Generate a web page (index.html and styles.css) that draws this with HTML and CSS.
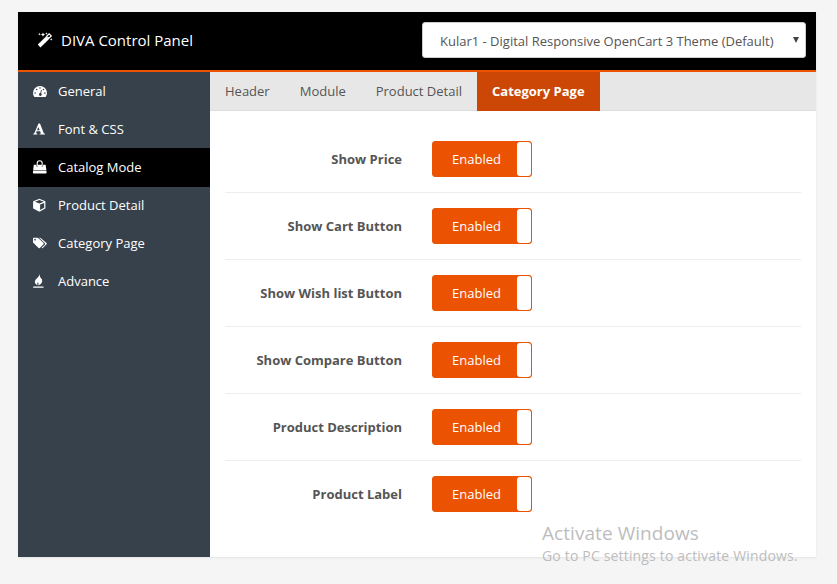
FILE: index.html
```html
<!DOCTYPE html>
<html lang="en">
<head>
<meta charset="utf-8">
<title>DIVA Control Panel</title>
<link rel="stylesheet" href="styles.css">
</head>
<body>
<div class="panel">
  <header class="top">
    <svg class="wand" viewBox="0 0 16 16"><path d="M.8 12.600 9 4.400l2.900 2.800-8.500 8.300z" fill="#fff"/><path d="M9.700 4.300 12.200 1.900l2 2-2.500 2.500z" fill="#000" stroke="#fff" stroke-width="1.300"/><path d="M2.500.8l.4 1 1 .4-1 .4-.4 1-.4-1-1-.4 1-.4zM6 .4l.7 1.500 1.500.6-1.500.7L6 4.700l-.7-1.500-1.500-.7 1.500-.6zM14.200 6l.4 1 1 .4-1 .4-.4 1-.4-1-1-.4 1-.4zM9.400.3l.4.900.9.300-.9.400-.4.900-.3-.9-.9-.4.900-.3z" fill="#fff"/></svg>
    <h1>DIVA Control Panel</h1>
    <div class="select"><span>Kular1 - Digital Responsive OpenCart 3 Theme (Default)</span><svg class="caret" viewBox="0 0 6 6"><path d="M0 0h6L3 6z"/></svg></div>
  </header>
  <div class="main">
    <nav class="menu">
      <a><svg viewBox="0 0 14 14"><path fill-rule="evenodd" d="M7 2a7 7 0 0 0-7 7c0 1.400.4 2.500 1.100 3.600.1.200.2.300.4.300h11c.2 0 .3-.1.400-.3A7 7 0 0 0 7 2zM2.100 8.200a.8.800 0 1 1 0 1.600.8.800 0 0 1 0-1.600zM3.600 4.700a.8.800 0 1 1 0 1.600.8.800 0 0 1 0-1.600zM7 3.200a.8.800 0 1 1 0 1.600.8.800 0 0 1 0-1.600zM8 6.100l.8.200-.7 2.900a1.400 1.400 0 1 1-.8-.2zM10.500 4.700a.8.800 0 1 1 0 1.600.8.800 0 0 1 0-1.600zM11.900 8.200a.8.800 0 1 1 0 1.600.8.800 0 0 1 0-1.600z"/></svg>General</a>
      <a><svg viewBox="0 0 14 14"><path fill-rule="evenodd" d="M5.500 1.500H7l3.700 9.400c.2.500.6.700 1.300.8v.8H6.600v-.8c1 0 1.300-.2 1.100-.8L7.100 9.300H3.700l-.5 1.300c-.2.700.1 1 1.200 1.100v.8H.2v-.8c.7-.1 1-.3 1.300-1zM5.300 4.900 4.100 8.300h2.600z"/></svg>Font &amp; CSS</a>
      <a class="on"><svg viewBox="0 0 14 14"><path d="M.8 4.700h11.800l.8 5.300H.2zM.1 10.500h13.300l.2 2.300c0 .5-.3.800-.8.800H.7c-.5 0-.8-.3-.8-.8z"/><path d="M4.200 6V3.300a2.500 2.500 0 0 1 5 0V6" fill="none" stroke="#fff" stroke-width="1.100"/><path d="M3.700 4.700v1.600h1M8.700 6.300h1V4.700" fill="none" stroke="#333" stroke-width=".6"/></svg>Catalog Mode</a>
      <a><svg viewBox="0 0 14 14"><path fill-rule="evenodd" d="M5.900.9.700 2.900c-.4.100-.6.400-.6.900v6.100c0 .4.200.7.600.9l5.200 2.700c.3.100.7.100 1 0l4.900-2.700c.4-.2.600-.5.600-.9V3.800c0-.5-.2-.8-.6-.9L6.900.9a1.500 1.500 0 0 0-1 0zM6.400 2.100l4.400 1.700-4.400 1.700L2 3.800zm.7 4.500L11.200 5v4.800l-4.100 2.100z"/></svg>Product Detail</a>
      <a><svg viewBox="0 0 15 14"><path fill-rule="evenodd" d="M0 2.200C0 1.700.3 1.400.8 1.400h3.800c.5 0 1 .3 1.500.7l5.200 5c.4.400.4.900 0 1.300l-4 4c-.4.400-.9.400-1.300 0L.8 7.200C.3 6.800 0 6.300 0 5.800zm2.200.3a.9.900 0 1 0 0 1.800.9.900 0 0 0 0-1.800z"/><path d="M6.500 1.400h.8c.5 0 1 .3 1.500.7l5.700 5c.4.400.4.900 0 1.300l-4 4c-.5.400-.9.300-1.300-.2l3.500-3.400c.4-.4.400-1 0-1.400z"/></svg>Category Page</a>
      <a><svg viewBox="0 0 14 14"><path d="M6.400 0C7.200 2 6.700 3 7.900 4.100c2 2 1.800 4.700-.4 6.100l-2.400 1.300c.8-1.500.5-2.300-.2-3.300l-.5.800c-.3.600 0 1.200.2 1.900C.9 9.500 1.300 6.600 3.800 4.400 5.600 2.900 6.500 1.900 6.400 0zM.2 12.400H10.500v1.400H.2z"/></svg>Advance</a>
    </nav>
    <section class="content">
      <div class="tabs"><a>Header</a><a>Module</a><a>Product Detail</a><a class="on">Category Page</a></div>
      <div class="form">
        <div class="row"><label>Show Price</label><div class="toggle"><span>Enabled</span><i></i></div></div>
        <div class="row"><label>Show Cart Button</label><div class="toggle"><span>Enabled</span><i></i></div></div>
        <div class="row"><label>Show Wish list Button</label><div class="toggle"><span>Enabled</span><i></i></div></div>
        <div class="row"><label>Show Compare Button</label><div class="toggle"><span>Enabled</span><i></i></div></div>
        <div class="row"><label>Product Description</label><div class="toggle"><span>Enabled</span><i></i></div></div>
        <div class="row"><label>Product Label</label><div class="toggle"><span>Enabled</span><i></i></div></div>
      </div>
    </section>
  </div>
</div>
<div class="watermark"><strong>Activate Windows</strong><span>Go to PC settings to activate Windows.</span></div>
</body>
</html>
```
FILE: styles.css
```css
* { box-sizing: border-box; }
body {
  margin: 0;
  padding: 12px 21px 0 18px;
  height: 584px;
  overflow: hidden;
  background: #f5f5f5;
  font: 13px/20px "Open Sans", sans-serif;
  color: #555;
}
.panel {
  height: 545px;
  background: #fff;
  box-shadow: 0 1px 2px rgba(0, 0, 0, .07);
  display: flex;
  flex-direction: column;
}
.top {
  height: 60px;
  padding: 0 10px 2px 19px;
  background: #000;
  border-bottom: 2px solid #eb5202;
  display: flex;
  align-items: center;
}
.wand { width: 16px; height: 16px; }
h1 {
  margin: 0 auto 0 8px;
  font-size: 15px;
  font-weight: 400;
  color: #fff;
}
.select {
  width: 384px;
  height: 36px;
  padding: 2px 6px 0 17px;
  background: #fff;
  border: 1px solid #ccc;
  border-radius: 3px;
  display: flex;
  align-items: center;
  justify-content: space-between;
  white-space: nowrap;
}
.caret { width: 6px; height: 6px; margin-top: -3px; fill: #444; }
.main { flex: 1; display: flex; }
.menu { width: 192px; background: #37414b; }
.menu a {
  height: 38px;
  padding-left: 15px;
  display: flex;
  align-items: center;
  gap: 11px;
  color: #fff;
}
.menu svg { width: 14px; height: 14px; fill: #fff; overflow: visible; }
.menu .on { background: #000; box-shadow: 0 1px #000; }
.content { flex: 1; }
.tabs {
  height: 39px;
  background: #e7e7e7;
  border-bottom: 1px solid #ddd;
  display: flex;
}
.tabs a { height: 39px; padding: 9px 15px 10px; }
.tabs .on { background: #cc4705; color: #fff; font-weight: 700; }
.form { padding: 15px 15px 0; }
.row {
  height: 67px;
  padding: 15px 0;
  border-bottom: 1px solid #ededed;
  display: flex;
  align-items: center;
  gap: 30px;
}
.row:last-child { border-bottom-color: transparent; }
.row label { width: 177px; text-align: right; font-weight: 700; }
.toggle {
  width: 100px;
  height: 36px;
  border: 1px solid #eb5202;
  border-radius: 3px;
  background: #eb5202;
  display: flex;
  align-items: center;
  color: #fff;
}
.toggle span { flex: 1; padding-left: 3px; text-align: center; }
.toggle i { width: 14px; height: 34px; background: #fff; border-radius: 3px; }
.watermark {
  position: absolute;
  left: 542px;
  top: 520px;
  display: flex;
  flex-direction: column;
  font-family: "Open Sans", sans-serif;
  color: #bdbdbd;
  white-space: nowrap;
}
.watermark strong { font-size: 19px; line-height: 26px; font-weight: 400; letter-spacing: .06px; }
.watermark span { font-size: 14px; line-height: 20px; letter-spacing: .17px; }
```
